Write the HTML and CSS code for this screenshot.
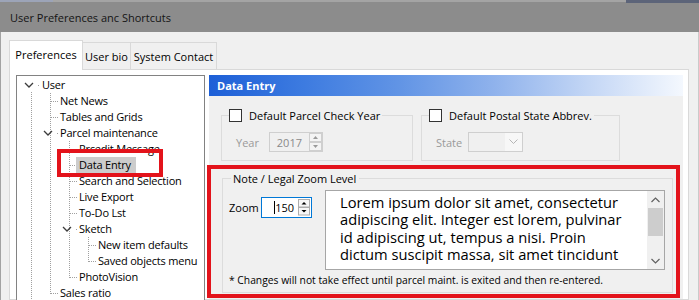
FILE: index.html
```html
<!DOCTYPE html>
<html>
<head>
<meta charset="utf-8">
<title>User Preferences</title>
<link rel="stylesheet" href="styles.css">
</head>
<body>
<div class="window">
  <div class="titlebar"><span class="title">User Preferences anc Shortcuts</span></div>
  <div class="client">
    <div class="tabs">
      <div class="tab tab-active tab-prefs">Preferences</div>
      <div class="tab tab-bio">User bio</div>
      <div class="tab tab-contact">System Contact</div>
    </div>
    <div class="tabpanel">
      <div class="tree">
        <svg class="tree-lines" width="187" height="230" viewBox="0 0 187 230">
          <g stroke="#a0a0a0" stroke-width="1" stroke-dasharray="1 1" fill="none">
            <line x1="14.5" y1="16" x2="14.5" y2="230"/>
            <line x1="33.5" y1="17" x2="33.5" y2="218"/>
            <line x1="34" y1="25.5" x2="42" y2="25.5"/>
            <line x1="34" y1="41.5" x2="42" y2="41.5"/>
            <line x1="34" y1="217.5" x2="42" y2="217.5"/>
            <line x1="52.5" y1="65" x2="52.5" y2="202"/>
            <line x1="53" y1="73.5" x2="61" y2="73.5"/>
            <line x1="53" y1="89.5" x2="61" y2="89.5"/>
            <line x1="53" y1="105.5" x2="61" y2="105.5"/>
            <line x1="53" y1="121.5" x2="61" y2="121.5"/>
            <line x1="53" y1="137.5" x2="61" y2="137.5"/>
            <line x1="53" y1="201.5" x2="61" y2="201.5"/>
            <line x1="71.5" y1="161" x2="71.5" y2="186"/>
            <line x1="72" y1="169.5" x2="80" y2="169.5"/>
            <line x1="72" y1="185.5" x2="80" y2="185.5"/>
          </g>
          <g fill="#a0a0a0">
            <rect x="21" y="9" width="1" height="1"/>
            <rect x="40" y="57" width="1" height="1"/>
            <rect x="59" y="153" width="1" height="1"/>
          </g>
          <g stroke="#3c3c3c" stroke-width="1.3" fill="none">
            <polyline points="8,7 12,11 16,7"/>
            <polyline points="27,55 31,59 35,55"/>
            <polyline points="46,151 50,155 54,151"/>
          </g>
        </svg>
        <div class="node l0">User</div>
        <div class="node l1">Net News</div>
        <div class="node l1">Tables and Grids</div>
        <div class="node l1">Parcel maintenance</div>
        <div class="node l2">Prcedit Message</div>
        <div class="node l2 selected"><span class="label">Data Entry</span></div>
        <div class="node l2">Search and Selection</div>
        <div class="node l2">Live Export</div>
        <div class="node l2">To-Do Lst</div>
        <div class="node l2">Sketch</div>
        <div class="node l3">New item defaults</div>
        <div class="node l3">Saved objects menu</div>
        <div class="node l2">PhotoVision</div>
        <div class="node l1">Sales ratio</div>
      </div>
      <div class="content">
        <div class="header">Data Entry</div>
        <div class="groups">
          <fieldset class="group group-year">
            <legend><span class="check"></span>Default Parcel Check Year</legend>
            <div class="field">
              <span class="lbl lbl-year">Year</span>
              <div class="spin spin-disabled">
                <span class="spin-value">2017</span>
                <svg class="spin-btns" width="13" height="18" viewBox="0 0 13 18">
                  <rect x="0.5" y="0.5" width="12" height="8" fill="#f4f4f4" stroke="#cfcfcf"/>
                  <rect x="0.5" y="9.5" width="12" height="8" fill="#f4f4f4" stroke="#cfcfcf"/>
                  <polygon points="4,6 9,6 6.5,3" fill="#9a9a9a"/>
                  <polygon points="4,12 9,12 6.5,15" fill="#9a9a9a"/>
                </svg>
              </div>
            </div>
          </fieldset>
          <fieldset class="group group-state">
            <legend><span class="check"></span>Default Postal State Abbrev.</legend>
            <div class="field">
              <span class="lbl lbl-state">State</span>
              <div class="combo">
                <span class="combo-value"></span>
                <span class="combo-btn">
                  <svg width="9" height="6" viewBox="0 0 9 6"><polyline points="0.5,0.5 4.5,4.5 8.5,0.5" fill="none" stroke="#b5b5b5" stroke-width="1"/></svg>
                </span>
              </div>
            </div>
          </fieldset>
        </div>
        <div class="annot">
          <fieldset class="group group-note">
            <legend>Note / Legal Zoom Level</legend>
            <div class="note-row">
              <div class="zoom">
                <span class="lbl-zoom">Zoom</span>
                <div class="spin spin-focus">
                  <span class="spin-value"><span class="caret"></span>150</span>
                  <svg class="spin-btns" width="12" height="17" viewBox="0 0 12 17">
                    <rect x="0.5" y="0.5" width="11" height="7.5" fill="#f7f7f7" stroke="#adadad"/>
                    <rect x="0.5" y="8.5" width="11" height="7.5" fill="#f7f7f7" stroke="#adadad"/>
                    <polygon points="3.5,5.5 8.5,5.5 6,3" fill="#000"/>
                    <polygon points="3.5,11 8.5,11 6,13.5" fill="#000"/>
                  </svg>
                </div>
              </div>
              <div class="memo">
                <div class="memo-text">Lorem ipsum dolor sit amet, consectetur<br>adipiscing elit. Integer est lorem, pulvinar<br>id adipiscing ut, tempus a nisi. Proin<br>dictum suscipit massa, sit amet tincidunt</div>
                <div class="vscroll">
                  <span class="sb-btn">
                    <svg width="9" height="6" viewBox="0 0 9 6"><polyline points="0.5,5 4.5,1 8.5,5" fill="none" stroke="#606060" stroke-width="1.2"/></svg>
                  </span>
                  <span class="sb-thumb"></span>
                  <span class="sb-track"></span>
                  <span class="sb-btn">
                    <svg width="9" height="6" viewBox="0 0 9 6"><polyline points="0.5,1 4.5,5 8.5,1" fill="none" stroke="#606060" stroke-width="1.2"/></svg>
                  </span>
                </div>
              </div>
            </div>
            <div class="footnote">* Changes will not take effect until parcel maint. is exited and then re-entered.</div>
          </fieldset>
        </div>
      </div>
    </div>
  </div>
</div>
</body>
</html>
```

FILE: styles.css
```css
*, *::before, *::after { box-sizing: border-box; }

html, body {
  margin: 0;
  padding: 0;
}

body {
  width: 699px;
  height: 300px;
  overflow: hidden;
  background: #f0f0f0;
  font-family: "Open Sans", "Noto Sans", sans-serif;
  font-size: 11px;
  color: #000;
}

.window {
  width: 699px;
  height: 300px;
  display: flex;
  flex-direction: column;
}

.titlebar {
  height: 32px;
  flex: none;
  padding: 2px 0 0 10px;
  display: flex;
  align-items: center;
  background:
    linear-gradient(#9ca4b8, #9ca4b8) 0 0 / 53px 2px no-repeat,
    linear-gradient(#5c6479, #5c6479) 626px 0 / 73px 3px no-repeat,
    linear-gradient(#a4a4a4, #a4a4a4) 0 0 / 100% 2px no-repeat,
    #8c8c8c;
}

.title {
  font-size: 11px;
  color: #141414;
}

.client {
  flex: 1;
  min-height: 0;
  display: flex;
  flex-direction: column;
  padding: 8px 0 0 8px;
  border-left: 1px solid #a3a3a3;
  border-right: 1px solid #cacaca;
}

.tabs {
  display: flex;
  align-items: flex-end;
  height: 30px;
  margin-bottom: -1px;
  position: relative;
  z-index: 1;
  flex: none;
}

.tab {
  height: 27px;
  margin-bottom: 1px;
  border: 1px solid #d9d9d9;
  border-bottom: none;
  background: #f0f0f0;
  display: flex;
  align-items: center;
  justify-content: center;
  padding-top: 1px;
  white-space: nowrap;
}

.tab-active {
  height: 30px;
  margin-bottom: 0;
  background: #fff;
  padding-top: 0;
  padding-bottom: 2px;
}

.tab-prefs { width: 74px; }
.tab-bio { width: 48px; border-left: none; }
.tab-contact { width: 86px; border-left: none; }

.tabpanel {
  width: 680px;
  flex: 1;
  min-height: 0;
  display: flex;
  gap: 4px;
  padding: 5px 5px 0 6px;
  background: #fff;
  border: 1px solid #d9d9d9;
}

.tree {
  width: 189px;
  height: 240px;
  flex: none;
  position: relative;
  padding-top: 1px;
  background: #fff;
  border: 1px solid #828282;
  letter-spacing: -0.2px;
}

.tree-lines {
  position: absolute;
  left: 0;
  top: 0;
}

.node {
  height: 16px;
  line-height: 16px;
  white-space: nowrap;
  position: relative;
}

.l0 { padding-left: 25px; }
.l1 { padding-left: 43px; }
.l2 { padding-left: 62px; }
.l3 { padding-left: 81px; }

.node.selected .label {
  display: inline-block;
  background: #cccccc;
  margin-left: -3px;
  padding: 0 5px 0 3px;
}

.node.selected::after {
  content: "";
  position: absolute;
  left: 40px;
  top: -8px;
  width: 106px;
  height: 28px;
  border: 4px solid #e3131b;
}

.content {
  flex: 1;
  min-width: 0;
  display: flex;
  flex-direction: column;
  background: #f0f0f0;
}

.header {
  height: 21px;
  flex: none;
  display: flex;
  align-items: center;
  padding-left: 8px;
  color: #fff;
  font-weight: 700;
  font-size: 11px;
  background: linear-gradient(to right, #1d5fd7 0%, #3d7be0 20%, #6194e5 40%, #8fb2ec 60%, #c3d6f5 80%, #f4f8fe 100%);
}

.groups {
  display: flex;
  gap: 8px;
  padding-left: 12px;
  margin-top: 11px;
  flex: none;
}

.group {
  margin: 0;
  min-width: 0;
  border: 1px solid #dcdcdc;
}

.group-year { width: 192px; padding: 0 7px 8px 7px; }
.group-state { width: 199px; padding: 0 7px 8px 7px; }

.group legend {
  padding: 0 2px 0 0;
  height: 16px;
  display: flex;
  align-items: center;
  white-space: nowrap;
}

.check {
  width: 13px;
  height: 13px;
  border: 1px solid #333;
  background: #fff;
  margin-right: 7px;
  flex: none;
}

.field {
  display: flex;
  align-items: center;
  margin-top: 9px;
  padding-left: 7px;
}

.lbl { color: #9a9a9a; }
.lbl-year { width: 33px; }
.lbl-state { width: 32px; }

.spin {
  display: flex;
  align-items: center;
  justify-content: flex-end;
}

.spin-disabled {
  width: 54px;
  height: 20px;
  border: 1px solid #cfcfcf;
  background: #f0f0f0;
  color: #8a8a8a;
}

.spin-disabled .spin-value { margin-right: 7px; }

.combo {
  width: 55px;
  height: 20px;
  display: flex;
  border: 1px solid #cfcfcf;
  background: #f0f0f0;
}

.combo-value { flex: 1; }

.combo-btn {
  width: 17px;
  display: flex;
  align-items: center;
  justify-content: center;
  background: #f7f7f7;
}

.annot {
  width: 473px;
  margin: 4px 0 0 -2px;
  padding: 1px 3px 1px 11px;
  border: 4px solid #e3131b;
  flex: none;
}

.group-note {
  width: 451px;
  padding: 0 4px 5px 6px;
}

.group-note legend {
  padding: 0 3px 0 2px;
  margin-left: 2px;
}

.note-row {
  display: flex;
  align-items: flex-start;
  gap: 13px;
  margin-top: 4px;
}

.zoom {
  display: flex;
  align-items: center;
  margin-top: 7px;
}

.lbl-zoom { width: 32px; }

.spin-focus {
  width: 51px;
  height: 21px;
  border: 1px solid #0078d7;
  background: #fff;
  padding-right: 1px;
}

.spin-focus .spin-value {
  margin-right: 4px;
  display: flex;
  align-items: center;
}

.caret {
  width: 1px;
  height: 13px;
  background: #000;
}

.memo {
  width: 340px;
  height: 80px;
  display: flex;
  border: 1px solid #a6a6a6;
  background: #fff;
  overflow: hidden;
}

.memo-text {
  flex: 1;
  padding: 3px 0 0 14px;
  font-size: 14.7px;
  line-height: 17.3px;
  white-space: nowrap;
  overflow: hidden;
}

.vscroll {
  width: 17px;
  flex: none;
  display: flex;
  flex-direction: column;
  background: #f0f0f0;
}

.sb-btn {
  height: 17px;
  display: flex;
  align-items: center;
  justify-content: center;
  flex: none;
}

.sb-thumb {
  height: 28px;
  margin: 0 1px;
  background: #cdcdcd;
  flex: none;
}

.sb-track { flex: 1; }

.footnote {
  margin-top: 4px;
  font-size: 10.3px;
  line-height: 13px;
  white-space: nowrap;
}
```
